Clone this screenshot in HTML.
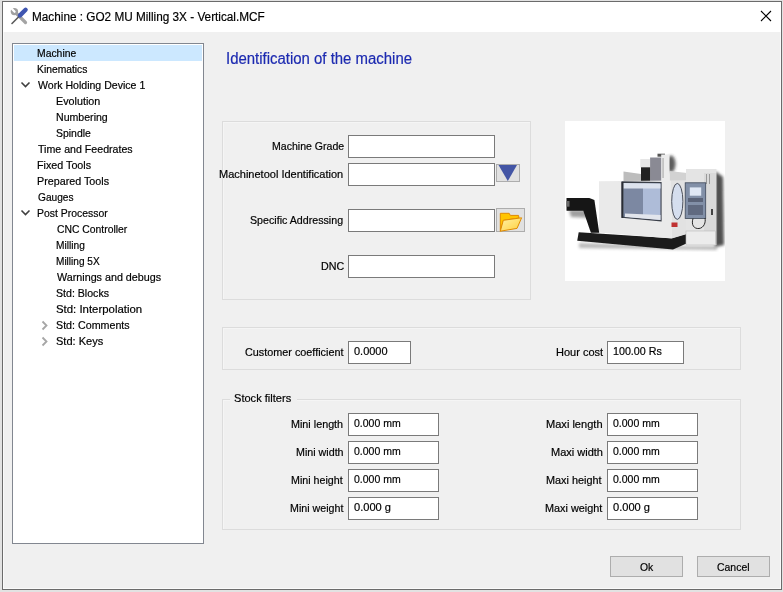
<!DOCTYPE html>
<html><head><meta charset="utf-8">
<style>
html,body{margin:0;padding:0;}
body{width:783px;height:592px;position:relative;overflow:hidden;background:#e2e2e2;font-family:"Liberation Sans",sans-serif;color:#000;}
div{box-sizing:border-box;}
.a{position:absolute;}
.win{position:absolute;left:2px;top:1px;width:780px;height:589px;border:1px solid #6b6b6b;background:#f0f0f0;box-shadow:inset 1px -1px 0 #fafafa,inset -1px 0 0 #fafafa;}
.tbar{position:absolute;left:3px;top:2px;width:778px;height:30px;background:#fff;}
.t{position:absolute;white-space:pre;font-size:12px;line-height:20px;transform-origin:0 0;-webkit-text-stroke:0.2px currentColor;}
.inp{position:absolute;background:#fff;border:1px solid #7a7a7a;}
.grp{position:absolute;border:1px solid #dcdcdc;box-shadow:inset 1px 1px 0 #f5f5f5;}
.btn{position:absolute;background:#e1e1e1;border:1px solid #adadad;}
</style></head><body>
<div class="win"></div>
<div class="tbar"></div>

<!-- title icon -->
<svg class="a" style="left:6px;top:4px" width="24" height="24" viewBox="0 0 24 24">
  <line x1="9" y1="8" x2="19.5" y2="18.5" stroke="#a4a4a4" stroke-width="3.2" stroke-linecap="round"/>
  <circle cx="8.4" cy="7.6" r="3.7" fill="#a0a0a0"/>
  <line x1="8.6" y1="7.8" x2="4.6" y2="3.6" stroke="#fff" stroke-width="2.2" stroke-linecap="round"/>
  <line x1="13" y1="12.5" x2="6" y2="19.5" stroke="#5a5a5a" stroke-width="1.6" stroke-linecap="round"/>
  <line x1="14" y1="11.4" x2="19.6" y2="5.8" stroke="#3f55b0" stroke-width="4.4" stroke-linecap="round"/>
</svg>
<!-- close X -->
<svg class="a" style="left:760px;top:10px" width="12" height="12" viewBox="0 0 12 12">
  <path d="M1 1L11 11M11 1L1 11" stroke="#000" stroke-width="1.1"/>
</svg>

<!-- tree -->
<div class="a" style="left:12px;top:43px;width:192px;height:501px;background:#fff;border:1px solid #828790;"></div>
<div class="a" style="left:14px;top:45px;width:188px;height:16px;background:#cce8ff;"></div>
<svg class="a" style="left:18px;top:78px" width="14" height="12" viewBox="0 0 14 12">
  <path d="M3.5 4.5L7.5 8.5L11.5 4.5" stroke="#404040" stroke-width="1.6" fill="none"/>
</svg>
<svg class="a" style="left:18px;top:206px" width="14" height="12" viewBox="0 0 14 12">
  <path d="M3.5 4.5L7.5 8.5L11.5 4.5" stroke="#404040" stroke-width="1.6" fill="none"/>
</svg>
<svg class="a" style="left:38px;top:318px" width="12" height="14" viewBox="0 0 12 14">
  <path d="M4.5 3.5L8.5 7.5L4.5 11.5" stroke="#a6a6a6" stroke-width="1.8" fill="none"/>
</svg>
<svg class="a" style="left:38px;top:334px" width="12" height="14" viewBox="0 0 12 14">
  <path d="M4.5 3.5L8.5 7.5L4.5 11.5" stroke="#a6a6a6" stroke-width="1.8" fill="none"/>
</svg>

<!-- group 1 -->
<div class="grp" style="left:222px;top:121px;width:309px;height:179px;"></div>
<div class="inp" style="left:348px;top:135px;width:147px;height:23px;"></div>
<div class="inp" style="left:348px;top:163px;width:147px;height:23px;"></div>
<div class="inp" style="left:348px;top:209px;width:147px;height:23px;"></div>
<div class="inp" style="left:348px;top:255px;width:147px;height:23px;"></div>
<div class="btn" style="left:496px;top:164px;width:24px;height:18px;"></div>
<svg class="a" style="left:496px;top:164px" width="24" height="18" viewBox="0 0 24 18">
  <path d="M2.5 1H21L11.8 17z" fill="#4355a5"/>
</svg>
<div class="btn" style="left:496px;top:208px;width:29px;height:24px;"></div>
<svg class="a" style="left:496px;top:208px" width="29" height="24" viewBox="0 0 29 24">
  <defs>
    <linearGradient id="fg" x1="0" y1="0" x2="1" y2="1">
      <stop offset="0" stop-color="#fff2a8"/><stop offset="1" stop-color="#ffcf3a"/>
    </linearGradient>
  </defs>
  <path d="M4.3 23.2V5.3H13.2L14.3 7.4H22.5L23 10L7.5 12.3z" fill="#ffc400" stroke="#e08a00" stroke-width="1"/>
  <path d="M4.3 23.2L7.3 12.3L25.6 9.8L21 20.4z" fill="url(#fg)" stroke="#e08a00" stroke-width="1" stroke-linejoin="round"/>
</svg>

<!-- machine image -->
<svg class="a" style="left:565px;top:121px" width="160" height="160" viewBox="0 0 160 160">
  <defs>
    <filter id="bl" x="-50%" y="-20%" width="200%" height="140%"><feGaussianBlur stdDeviation="1.6"/></filter>
    <filter id="bl2" x="-20%" y="-20%" width="140%" height="140%"><feGaussianBlur stdDeviation=".5"/></filter>
  </defs>
  <rect width="160" height="160" fill="#fff"/>
  <!-- shadows -->
  <path d="M150 50L158 56L159 124L150 126z" fill="#333" filter="url(#bl)" opacity=".85"/>
  <path d="M4 89L27 89L29 97L6 96z" fill="#777" filter="url(#bl)" opacity=".7"/>
  <path d="M14 122L122 125L152 125L152 129L14 127z" fill="#777" filter="url(#bl)" opacity=".5"/>
  <g filter="url(#bl2)">
  <!-- base -->
  <path d="M13.7 111.3L106.7 117.3L121.5 112.8L121.5 122.5L108 128.4L12.2 119.7z" fill="#1c1c1c"/>
  <!-- top sheet -->
  <path d="M58.5 50.5L76 53L76 61L58.5 61z" fill="#bdbdbd"/>
  <!-- column -->
  <ellipse cx="106" cy="43" rx="4.5" ry="8.5" fill="#2a2a2a" opacity=".75" filter="url(#bl)"/>
  <path d="M104.5 50L122 52L122 60L104.5 60z" fill="#d2d2d2"/>
  <rect x="92.5" y="32.7" width="7.5" height="3" fill="#555" filter="url(#bl2)"/>
  <rect x="96.2" y="33.5" width="8.3" height="26.5" fill="#ececec"/>
  <rect x="97.6" y="37" width=".9" height="20" fill="#9a9a9a"/>
  <rect x="75.3" y="38" width="9.8" height="8.5" fill="#e6e6e6"/>
  <rect x="85.1" y="36.5" width="11.1" height="23.5" fill="#8a8a94"/>
  <rect x="76" y="46.3" width="9.1" height="13.7" fill="#222"/>
  <!-- main body -->
  <path d="M34 60.3L106 59.5L106.7 117.4L34 111.5z" fill="#eaeaea"/>
  <path d="M106 59.5L122 59.3L122 113L106.7 117.4z" fill="#e2e2e2"/>
  <!-- window -->
  <path d="M56.5 60.3L96.6 61L96.6 100.4L56.5 96.8z" fill="#3a3f4a"/>
  <path d="M58 62L95.5 62.5L95.5 99L58 95.5z" fill="#aebcd8"/>
  <path d="M58.5 62L78 62.3L78 97.2L58.5 95.5z" fill="#7c88a2"/>
  <path d="M58 62L95.5 62.5L95.5 67.5L58 67.5z" fill="#dde3ee"/>
  <path d="M60 92.5L95.5 94L95.5 99L60 96z" fill="#e2e5ec"/>
  <rect x="56.5" y="61" width="2" height="36" fill="#2a2e36"/>
  <!-- round door window -->
  <ellipse cx="112.3" cy="80.4" rx="5.6" ry="18" fill="#d5deee" stroke="#4a4f5a" stroke-width="1"/>
  <rect x="106.5" y="101.5" width="6" height="4.5" fill="#c03030"/>
  <!-- conveyor -->
  <path d="M1.5 77L24.3 77L29.4 79L34.2 111.8L25.9 111.8L18.3 89.8L1.5 89.8z" fill="#161616"/>
  <rect x="1.5" y="80" width="3" height="5.7" fill="#6a6a6a"/>
  <!-- cabinet -->
  <path d="M121 48L151.4 48L151.4 124L121 124z" fill="#e4e4e4"/>
  <rect x="139" y="52" width="12" height="70" fill="#dadada"/>
  <rect x="141" y="53" width="1" height="10" fill="#999"/><rect x="144" y="53" width="1" height="10" fill="#999"/>
  <rect x="121" y="110" width="29.6" height="14" fill="#ececec" stroke="#bbb" stroke-width=".6"/>
  <rect x="146" y="88" width="2" height="6" fill="#444"/>
  <!-- control panel -->
  <rect x="120.2" y="61.8" width="20.5" height="35.7" fill="#8290a8" stroke="#3d4758" stroke-width=".8"/>
  <rect x="124.8" y="66.4" width="11.4" height="8.3" fill="#e0e8f5"/>
  <rect x="123" y="77" width="15" height="4" fill="#5a6478"/>
  <rect x="123" y="84" width="15" height="10" fill="#606b80"/>
  <path d="M128 97.5C126 104 129 108 134 107.5C139 107 141 101 140 97" stroke="#2a2a2a" stroke-width="1" fill="none"/>
  </g>
</svg>


<!-- group 2 -->
<div class="grp" style="left:222px;top:327px;width:519px;height:43px;"></div>
<div class="inp" style="left:348px;top:341px;width:63px;height:23px;"></div>
<div class="inp" style="left:607px;top:341px;width:77px;height:23px;"></div>

<!-- group 3 -->
<div class="grp" style="left:222px;top:399px;width:519px;height:131px;"></div>
<div class="a" style="left:230px;top:397px;width:67px;height:5px;background:#f0f0f0;"></div>
<div class="inp" style="left:348px;top:413px;width:91px;height:23px;"></div>
<div class="inp" style="left:348px;top:441px;width:91px;height:23px;"></div>
<div class="inp" style="left:348px;top:469px;width:91px;height:23px;"></div>
<div class="inp" style="left:348px;top:497px;width:91px;height:23px;"></div>
<div class="inp" style="left:607px;top:413px;width:91px;height:23px;"></div>
<div class="inp" style="left:607px;top:441px;width:91px;height:23px;"></div>
<div class="inp" style="left:607px;top:469px;width:91px;height:23px;"></div>
<div class="inp" style="left:607px;top:497px;width:91px;height:23px;"></div>

<!-- buttons -->
<div class="btn" style="left:610px;top:556px;width:73px;height:21px;"></div>
<div class="btn" style="left:697px;top:556px;width:73px;height:21px;"></div>

<div class="t" style="left:32.06px;top:7px;font-size:12.5px;color:#000;transform:scaleX(0.9411)">Machine : GO2 MU Milling 3X - Vertical.MCF</div>
<div class="t" style="left:36.90px;top:43px;font-size:11.5px;color:#000;transform:scaleX(0.9024)">Machine</div>
<div class="t" style="left:36.80px;top:59px;font-size:11.5px;color:#000;transform:scaleX(0.8964)">Kinematics</div>
<div class="t" style="left:37.70px;top:75px;font-size:11.5px;color:#000;transform:scaleX(0.9190)">Work Holding Device 1</div>
<div class="t" style="left:55.87px;top:91px;font-size:11.5px;color:#000;transform:scaleX(0.9348)">Evolution</div>
<div class="t" style="left:55.58px;top:107px;font-size:11.5px;color:#000;transform:scaleX(0.9200)">Numbering</div>
<div class="t" style="left:55.59px;top:123px;font-size:11.5px;color:#000;transform:scaleX(0.9081)">Spindle</div>
<div class="t" style="left:38.00px;top:139px;font-size:11.5px;color:#000;transform:scaleX(0.9235)">Time and Feedrates</div>
<div class="t" style="left:37.07px;top:155px;font-size:11.5px;color:#000;transform:scaleX(0.9333)">Fixed Tools</div>
<div class="t" style="left:37.07px;top:171px;font-size:11.5px;color:#000;transform:scaleX(0.9342)">Prepared Tools</div>
<div class="t" style="left:38.00px;top:187px;font-size:11.5px;color:#000;transform:scaleX(0.8825)">Gauges</div>
<div class="t" style="left:37.09px;top:203px;font-size:11.5px;color:#000;transform:scaleX(0.9065)">Post Processor</div>
<div class="t" style="left:56.60px;top:219px;font-size:11.5px;color:#000;transform:scaleX(0.9013)">CNC Controller</div>
<div class="t" style="left:55.72px;top:235px;font-size:11.5px;color:#000;transform:scaleX(0.8839)">Milling</div>
<div class="t" style="left:55.72px;top:251px;font-size:11.5px;color:#000;transform:scaleX(0.8755)">Milling 5X</div>
<div class="t" style="left:56.60px;top:267px;font-size:11.5px;color:#000;transform:scaleX(0.9342)">Warnings and debugs</div>
<div class="t" style="left:55.68px;top:283px;font-size:11.5px;color:#000;transform:scaleX(0.9214)">Std: Blocks</div>
<div class="t" style="left:55.61px;top:299px;font-size:11.5px;color:#000;transform:scaleX(0.9906)">Std: Interpolation</div>
<div class="t" style="left:55.67px;top:315px;font-size:11.5px;color:#000;transform:scaleX(0.9295)">Std: Comments</div>
<div class="t" style="left:55.64px;top:331px;font-size:11.5px;color:#000;transform:scaleX(0.9604)">Std: Keys</div>
<div class="t" style="left:226.47px;top:49px;font-size:16px;color:#1c2ab0;transform:scaleX(0.9338)">Identification of the machine</div>
<div class="t" style="left:271.58px;top:136px;font-size:11.5px;color:#000;transform:scaleX(0.9182)">Machine Grade</div>
<div class="t" style="left:219.44px;top:164px;font-size:11.5px;color:#000;transform:scaleX(0.9570)">Machinetool Identification</div>
<div class="t" style="left:250.47px;top:210px;font-size:11.5px;color:#000;transform:scaleX(0.9273)">Specific Addressing</div>
<div class="t" style="left:321.07px;top:256px;font-size:11.5px;color:#000;transform:scaleX(0.9304)">DNC</div>
<div class="t" style="left:244.60px;top:342px;font-size:11.5px;color:#000;transform:scaleX(0.9410)">Customer coefficient</div>
<div class="t" style="left:555.64px;top:342px;font-size:11.5px;color:#000;transform:scaleX(0.9583)">Hour cost</div>
<div class="t" style="left:233.54px;top:388px;font-size:11.5px;color:#000;transform:scaleX(0.9621)">Stock filters</div>
<div class="t" style="left:291.46px;top:414px;font-size:11.5px;color:#000;transform:scaleX(0.9370)">Mini length</div>
<div class="t" style="left:295.57px;top:442px;font-size:11.5px;color:#000;transform:scaleX(0.9300)">Mini width</div>
<div class="t" style="left:291.47px;top:470px;font-size:11.5px;color:#000;transform:scaleX(0.9291)">Mini height</div>
<div class="t" style="left:289.67px;top:498px;font-size:11.5px;color:#000;transform:scaleX(0.9281)">Mini weight</div>
<div class="t" style="left:546.44px;top:414px;font-size:11.5px;color:#000;transform:scaleX(0.9614)">Maxi length</div>
<div class="t" style="left:550.54px;top:442px;font-size:11.5px;color:#000;transform:scaleX(0.9566)">Maxi width</div>
<div class="t" style="left:546.46px;top:470px;font-size:11.5px;color:#000;transform:scaleX(0.9448)">Maxi height</div>
<div class="t" style="left:544.66px;top:498px;font-size:11.5px;color:#000;transform:scaleX(0.9433)">Maxi weight</div>
<div class="t" style="left:353.80px;top:341px;font-size:11.5px;color:#000;transform:scaleX(0.9543)">0.0000</div>
<div class="t" style="left:613.07px;top:341px;font-size:11.5px;color:#000;transform:scaleX(0.9314)">100.00 Rs</div>
<div class="t" style="left:353.70px;top:413px;font-size:11.5px;color:#000;transform:scaleX(0.9118)">0.000 mm</div>
<div class="t" style="left:353.70px;top:441px;font-size:11.5px;color:#000;transform:scaleX(0.9118)">0.000 mm</div>
<div class="t" style="left:353.70px;top:469px;font-size:11.5px;color:#000;transform:scaleX(0.9118)">0.000 mm</div>
<div class="t" style="left:353.70px;top:497px;font-size:11.5px;color:#000;transform:scaleX(0.9632)">0.000 g</div>
<div class="t" style="left:612.80px;top:413px;font-size:11.5px;color:#000;transform:scaleX(0.9118)">0.000 mm</div>
<div class="t" style="left:612.80px;top:441px;font-size:11.5px;color:#000;transform:scaleX(0.9118)">0.000 mm</div>
<div class="t" style="left:612.80px;top:469px;font-size:11.5px;color:#000;transform:scaleX(0.9118)">0.000 mm</div>
<div class="t" style="left:612.80px;top:497px;font-size:11.5px;color:#000;transform:scaleX(0.9632)">0.000 g</div>
<div class="t" style="left:639.50px;top:557px;font-size:11.5px;color:#000;transform:scaleX(0.9000)">Ok</div>
<div class="t" style="left:716.50px;top:557px;font-size:11.5px;color:#000;transform:scaleX(0.9086)">Cancel</div>
</body></html>
